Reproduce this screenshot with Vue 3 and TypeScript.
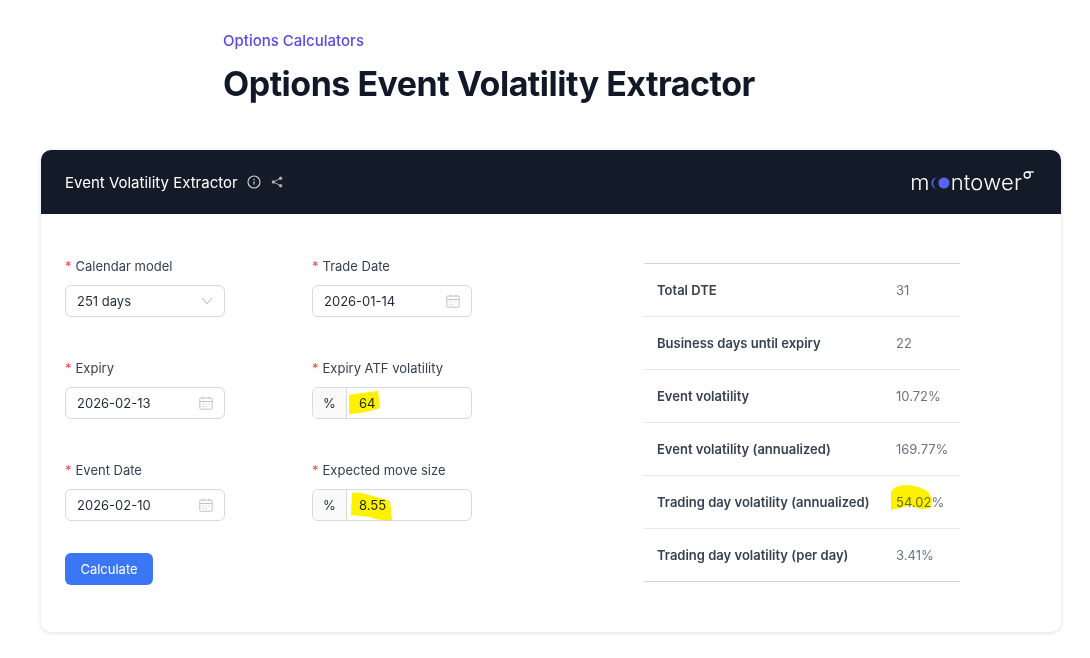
<script setup lang="ts">
interface Field { label: string; value: string; kind: 'select' | 'date' | 'percent'; mark?: string }
const fields: Field[] = [
  { label: 'Calendar model', value: '251 days', kind: 'select' },
  { label: 'Trade Date', value: '2026-01-14', kind: 'date' },
  { label: 'Expiry', value: '2026-02-13', kind: 'date' },
  { label: 'Expiry ATF volatility', value: '64', kind: 'percent', mark: 'a' },
  { label: 'Event Date', value: '2026-02-10', kind: 'date' },
  { label: 'Expected move size', value: '8.55', kind: 'percent', mark: 'b' },
]
const rows = [
  ['Total DTE', '31'],
  ['Business days until expiry', '22'],
  ['Event volatility', '10.72%'],
  ['Event volatility (annualized)', '169.77%'],
  ['Trading day volatility (annualized)', '54.02%'],
  ['Trading day volatility (per day)', '3.41%'],
]
</script>

<template>
  <main class="page">
    <header class="intro">
      <p class="eyebrow">Options Calculators</p>
      <h1 class="title">Options Event Volatility Extractor</h1>
    </header>

    <section class="card">
      <div class="card-head">
        <div class="head-left">
          <span class="head-title">Event Volatility Extractor</span>
          <svg class="info" width="14" height="14" viewBox="0 0 14 14" fill="none">
            <circle cx="7" cy="7" r="6" stroke="#c9cbd0" stroke-width="1.2" />
            <path d="M7 6.2v3.4" stroke="#c9cbd0" stroke-width="1.2" />
            <circle cx="7" cy="4.4" r=".75" fill="#c9cbd0" />
          </svg>
          <svg class="share" width="12" height="12" viewBox="0 0 12 12" fill="none">
            <path d="M9.6 2.2 2.6 6l7 3.8" stroke="#a9acb3" stroke-width="1" />
            <circle cx="9.6" cy="2.2" r="1.7" fill="#a9acb3" />
            <circle cx="2.4" cy="6" r="1.7" fill="#a9acb3" />
            <circle cx="9.6" cy="9.8" r="1.7" fill="#a9acb3" />
          </svg>
        </div>
        <div class="logo">
          <span>m</span>
          <svg class="moons" width="19" height="12" viewBox="0 0 19 12">
            <path d="M6 .4a5.6 5.6 0 1 0 0 11.2A6 6 0 0 1 6 .4Z" fill="#5a63f0" />
            <circle cx="13" cy="6" r="5.6" fill="#5a63f0" />
          </svg>
          <span>ntower</span>
          <svg class="sigma" width="11" height="9" viewBox="0 0 11 9" fill="none">
            <circle cx="4.2" cy="5" r="3" stroke="#fff" stroke-width="1.4" />
            <path d="M4.2 2H10.8" stroke="#fff" stroke-width="1.4" />
          </svg>
        </div>
      </div>

      <div class="card-body">
        <div class="left">
          <form class="form" @submit.prevent>
            <div v-for="f in fields" :key="f.label" class="field">
              <label class="label"><span class="star">*</span>{{ f.label }}</label>
              <div class="control" :class="{ 'has-addon': f.kind === 'percent' }">
                <span v-if="f.kind === 'percent'" class="addon">%</span>
                <span class="value" :class="{ marked: f.mark }">
                  {{ f.value }}
                  <svg v-if="f.mark === 'a'" class="mark mark-a" width="32" height="23" viewBox="0 0 32 23">
                    <path d="M1 4 Q12 2 30 0 L32 17 Q20 22 1 23Z" fill="#fff200" />
                  </svg>
                  <svg v-if="f.mark === 'b'" class="mark mark-b" width="41" height="29" viewBox="0 0 41 29">
                    <path d="M1 1 Q8 0 11 1 L39 9 L41 28 Q28 29 19 25 Q8 24 0 23Z" fill="#fff200" />
                  </svg>
                </span>
                <svg v-if="f.kind === 'select'" class="ico chevron" width="12" height="8" viewBox="0 0 12 8" fill="none">
                  <path d="M1 1l5 5.6L11 1" stroke="#c0c4cb" stroke-width="1.1" />
                </svg>
                <svg v-if="f.kind === 'date'" class="ico" width="14" height="14" viewBox="0 0 14 14" fill="none">
                  <rect x=".8" y="2" width="12.4" height="11.2" rx="1" stroke="#bfc2c8" />
                  <path d="M.8 5.5h12.4M4 .6v2.6M10 .6v2.6" stroke="#bfc2c8" />
                  <path d="M3.2 8h1.6M6.2 8h1.6M9.2 8h1.6M3.2 10.5h1.6M6.2 10.5h1.6" stroke="#d4d6da" />
                </svg>
              </div>
            </div>
          </form>
          <button class="calc" type="button">Calculate</button>
        </div>

        <div class="results">
          <div v-for="r in rows" :key="r[0]" class="row">
            <span class="r-key">{{ r[0] }}</span>
            <span class="r-val">
              {{ r[1] }}
              <svg v-if="r[1] === '54.02%'" class="mark mark-c" width="42" height="25" viewBox="0 0 42 25">
                <path d="M0 7 Q3 1 13 0 Q30 0 38 8 Q42 14 40 19 Q41 24 32 24 Q24 24 20 20 Q10 23 0 25Z" fill="#fff200" />
              </svg>
            </span>
          </div>
        </div>
      </div>
    </section>
  </main>
</template>

<style scoped>
.page {
  width: 1090px;
  height: 658px;
  overflow: hidden;
  box-sizing: border-box;
  padding: 31px 29px 0 41px;
  font-family: Inter, "Noto Sans", sans-serif;
  font-size: 13px;
  color: #1f2937;
  background: #fff;
}
.intro { padding-left: 182px; height: 119px; }
.eyebrow {
  margin: 0;
  font-size: 15px;
  line-height: 20px;
  font-weight: 500;
  color: #5b4ae0;
}
.title {
  margin: 5px 0 0;
  font-size: 34px;
  line-height: 56px;
  font-weight: 700;
  letter-spacing: -0.5px;
  color: #111827;
}
.card {
  height: 482px;
  border-radius: 10px;
  background: #fff;
  box-shadow: 0 1px 4px rgba(17, 24, 39, 0.14);
}
.card-head {
  height: 64px;
  box-sizing: border-box;
  padding: 0 27px 0 24px;
  display: flex;
  align-items: center;
  justify-content: space-between;
  background: #131a28;
  border-radius: 10px 10px 0 0;
}
.head-left { display: flex; align-items: center; }
.head-title { font-size: 15px; color: #fff; }
.info { margin-left: 9px; }
.share { margin-left: 10px; }
.logo {
  display: flex;
  align-items: center;
  font-size: 22px;
  font-weight: 300;
  letter-spacing: 0.2px;
  color: #fff;
  line-height: 24px;
}
.moons { margin: 1px 1px 0 1px; }
.sigma { align-self: flex-start; margin: 0 0 0 1px; }
.card-body {
  display: flex;
  padding: 42px 0 0 24px;
}
.left { width: 579px; }
.form {
  display: grid;
  grid-template-columns: 160px 160px;
  column-gap: 87px;
  row-gap: 30px;
}
.field { display: flex; flex-direction: column; height: 72px; }
.label {
  height: 20px;
  line-height: 20px;
  margin-bottom: 9px;
  color: #374151;
}
.star { color: #e5484d; margin-right: 4px; }
.control {
  box-sizing: border-box;
  height: 32px;
  border: 1px solid #d9d9d9;
  border-radius: 6px;
  padding: 0 11px;
  display: flex;
  align-items: center;
  justify-content: space-between;
  background: #fff;
}
.control.has-addon { padding: 0; justify-content: flex-start; }
.addon {
  width: 34px;
  box-sizing: border-box;
  align-self: stretch;
  display: flex;
  align-items: center;
  justify-content: center;
  background: #fafafa;
  border-right: 1px solid #d9d9d9;
  border-radius: 5px 0 0 5px;
}
.value { position: relative; }
.has-addon .value { margin-left: 12px; }
.mark {
  position: absolute;
  mix-blend-mode: multiply;
  pointer-events: none;
}
.mark-a { left: -11px; top: -4px; }
.mark-b { left: -8px; top: -5px; }
.mark-c { left: -5px; top: -9px; }
.ico { flex: none; }
.calc {
  display: block;
  margin-top: 21px;
  width: 88px;
  height: 32px;
  border: 0;
  border-radius: 6px;
  background: #3b76f6;
  color: #fff;
  font: 400 13px Inter, "Noto Sans", sans-serif;
}
.results {
  width: 316px;
  align-self: flex-start;
  margin-top: 7px;
  border-top: 1px solid #d1d5db;
  border-bottom: 1px solid #d1d5db;
}
.row {
  height: 53px;
  box-sizing: border-box;
  display: flex;
  align-items: center;
  padding-left: 13px;
  font-size: 13px;
}
.row:first-child { height: 52px; }
.row + .row { border-top: 1px solid #e5e7eb; }
.r-key { width: 239px; font-weight: 600; color: #374151; }
.r-val { position: relative; color: #6b7280; }
</style>

<style>
html, body { margin: 0; background: #fff; }
</style>
